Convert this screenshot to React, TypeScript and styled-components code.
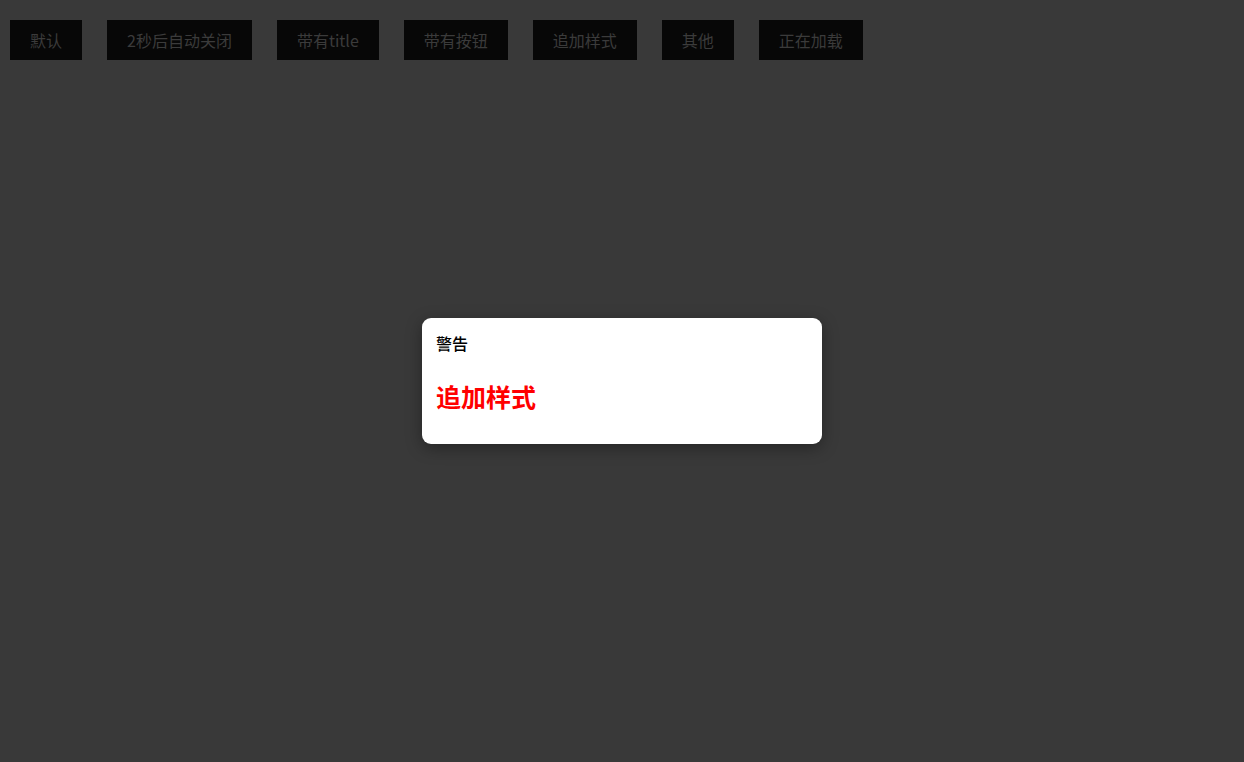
import { FC } from "react";
import styled, { createGlobalStyle } from "styled-components";

const GlobalStyle = createGlobalStyle`
  html, body {
    margin: 0;
    padding: 0;
    height: 100%;
    background: #393939;
    font-family: "Noto Sans CJK SC", "Noto Sans", sans-serif;
  }
  #root {
    height: 100%;
  }
`;

const Page = styled.div`
  position: relative;
  width: 100%;
  height: 100vh;
  overflow: hidden;
`;

const Toolbar = styled.div`
  display: flex;
  gap: 25px;
  padding: 20px 10px;
`;

const DemoButton = styled.button`
  height: 40px;
  padding: 0 20px;
  border: none;
  background: #070707;
  color: #3b3b3b;
  font-family: inherit;
  font-size: 16px;
  line-height: 40px;
  white-space: nowrap;
  cursor: pointer;
`;

const Overlay = styled.div`
  position: absolute;
  inset: 0;
  display: flex;
  align-items: center;
  justify-content: center;
`;

const Dialog = styled.div`
  width: 400px;
  box-sizing: border-box;
  padding: 13px 14px 29px;
  background: #fff;
  border-radius: 9px;
  box-shadow: 0 4px 16px rgba(0, 0, 0, 0.35);
`;

const DialogTitle = styled.div`
  font-size: 16px;
  line-height: 24px;
  font-weight: 500;
  color: #000;
`;

const DialogBody = styled.div<{ $accent?: string }>`
  margin-top: 23px;
  font-size: 25px;
  line-height: 37px;
  font-weight: bold;
  color: ${(p) => p.$accent ?? "#333"};
`;

const demos = ["默认", "2秒后自动关闭", "带有title", "带有按钮", "追加样式", "其他", "正在加载"];

const App: FC = () => {
  return (
    <Page>
      <GlobalStyle />
      <Toolbar>
        {demos.map((d) => (
          <DemoButton key={d}>{d}</DemoButton>
        ))}
      </Toolbar>
      <Overlay>
        <Dialog>
          <DialogTitle>警告</DialogTitle>
          <DialogBody $accent="#ff0000">追加样式</DialogBody>
        </Dialog>
      </Overlay>
    </Page>
  );
};

export default App;
